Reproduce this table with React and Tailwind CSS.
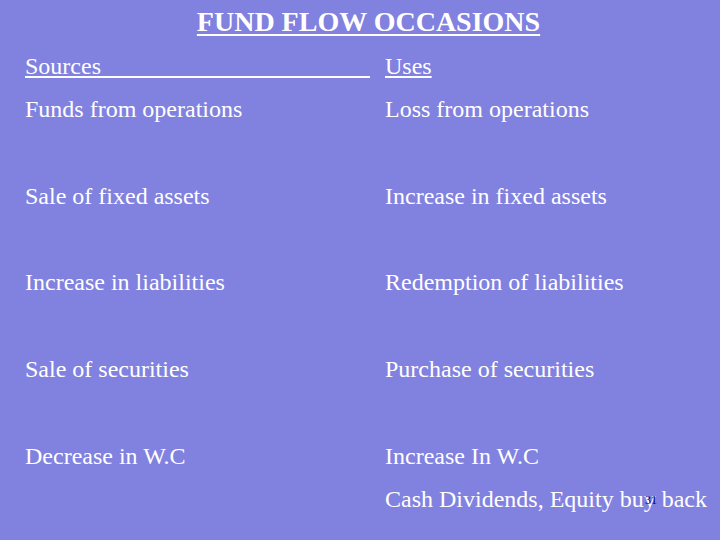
export default function App() {
  const rows = [
    ["Funds from operations", "Loss from operations"],
    null,
    ["Sale of fixed assets", "Increase in fixed assets"],
    null,
    ["Increase in liabilities", "Redemption of liabilities"],
    null,
    ["Sale of securities", "Purchase of securities"],
    null,
    ["Decrease in W.C", "Increase In W.C"],
    ["", "Cash Dividends, Equity buy back"],
  ];
  return (
    <div
      className="w-[720px] h-[540px] bg-[#8181df] text-white overflow-hidden"
      style={{ fontFamily: '"Liberation Serif", "Times New Roman", serif' }}
    >
      <div className="h-[45px] flex justify-center pt-[4px] pl-[17px]">
        <span className="text-[28px] font-bold underline leading-[36px] decoration-[2px] underline-offset-[3px]">
          FUND FLOW OCCASIONS
        </span>
      </div>
      <div className="px-[25px] grid grid-cols-[360px_1fr] text-[24px] leading-[43.3px] auto-rows-[43.3px]">
        <div className="w-[345px] overflow-hidden whitespace-nowrap underline underline-offset-[2px]">
          Sources{"\u00a0".repeat(80)}
        </div>
        <div>
          <span className="underline underline-offset-[2px]">Uses</span>
        </div>
        {rows.map((r, i) =>
          r ? (
            <>
              <div key={"a" + i} className="whitespace-nowrap">{r[0]}</div>
              <div key={"b" + i} className="whitespace-nowrap relative">
                {r[1]}
                {i === 9 && (
                  <span className="absolute left-[260px] top-[16px] text-[12px] text-[#000070] leading-none">
                    31
                  </span>
                )}
              </div>
            </>
          ) : (
            <>
              <div key={"c" + i}></div>
              <div key={"d" + i}></div>
            </>
          )
        )}
      </div>
    </div>
  );
}
